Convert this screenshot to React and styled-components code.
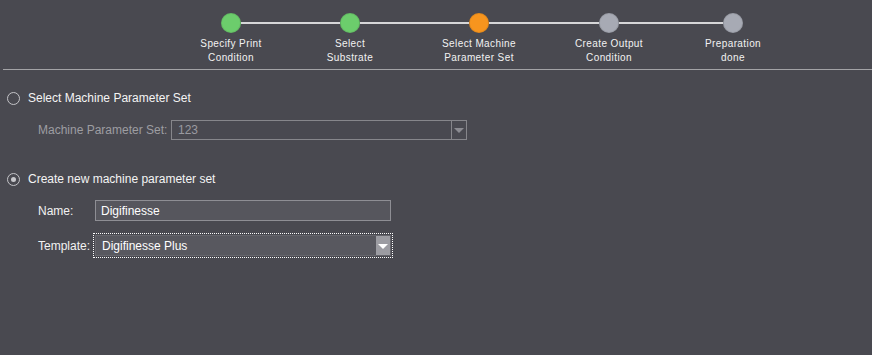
import React from "react";
import styled, { createGlobalStyle } from "styled-components";

const Global = createGlobalStyle`
  html, body { margin: 0; padding: 0; background: #494950; }
  body { font-family: "Liberation Sans", Arial, sans-serif; }
  #root { width: 872px; height: 355px; overflow: hidden; background: #494950; }
`;

const Page = styled.div`
  display: flex;
  flex-direction: column;
  padding-left: 3px;
`;

const Stepper = styled.div`
  display: flex;
  align-items: flex-start;
  padding: 13px 0 0 218px;
  height: 56px;
`;

const Step = styled.div`
  display: flex;
  flex-direction: column;
  align-items: center;
  width: 20px;
  flex: none;
`;

const Dot = styled.div`
  width: 20px;
  height: 20px;
  border-radius: 50%;
  background: ${(p) => p.$color};
  box-shadow: inset 0 0 0 1px rgba(0,0,0,0.08);
`;

const StepLabel = styled.div`
  margin-top: 4px;
  white-space: nowrap;
  text-align: center;
  font-size: 10px;
  line-height: 14px;
  letter-spacing: 0.4px;
  color: #f2f2f2;
`;

const Connector = styled.div`
  flex: none;
  width: ${(p) => p.$w}px;
  height: 2px;
  margin-top: 9px;
  background: #d6d6d8;
`;

const Separator = styled.div`
  height: 1px;
  background: #a3a3a6;
`;

const Form = styled.div`
  display: flex;
  flex-direction: column;
  padding: 20px 0 0 4px;
  font-size: 12px;
  color: #f4f4f4;
`;

const RadioRow = styled.label`
  display: flex;
  align-items: center;
  gap: 8px;
  height: 16px;
  margin-top: ${(p) => p.$mt || 0}px;
`;

const RadioCircle = styled.span`
  box-sizing: border-box;
  width: 13px;
  height: 13px;
  border-radius: 50%;
  border: 1px solid #c4c4c8;
  display: flex;
  align-items: center;
  justify-content: center;
  &::after {
    content: "";
    display: ${(p) => (p.$checked ? "block" : "none")};
    width: 5px;
    height: 5px;
    border-radius: 50%;
    background: #c8c8cc;
  }
`;

const FieldRow = styled.div`
  display: flex;
  align-items: center;
  padding-left: 31px;
  margin-top: ${(p) => p.$mt || 0}px;
`;

const FieldLabel = styled.span`
  width: ${(p) => p.$w}px;
  flex: none;
  white-space: nowrap;
  color: ${(p) => (p.$disabled ? "#9d9da2" : "#f2f2f2")};
`;

const Combo = styled.div`
  box-sizing: border-box;
  display: flex;
  width: ${(p) => p.$w}px;
  height: ${(p) => p.$h}px;
  border: 1px solid ${(p) => (p.$disabled ? "#86868b" : "#66666c")};
  background: ${(p) => (p.$disabled ? "transparent" : "#58585f")};
  outline: ${(p) => (p.$focus ? "1px dotted #ffffff" : "none")};
  outline-offset: 1px;
`;

const ComboText = styled.div`
  flex: 1;
  display: flex;
  align-items: center;
  padding-left: ${(p) => p.$pl}px;
  color: ${(p) => (p.$disabled ? "#9a9aa0" : "#ffffff")};
`;

const ArrowBtn = styled.div`
  width: ${(p) => p.$w}px;
  flex: none;
  display: flex;
  align-items: center;
  justify-content: center;
  background: ${(p) => (p.$disabled ? "transparent" : "#9c9ca2")};
  border-left: ${(p) => (p.$disabled ? "1px solid #86868b" : "none")};
`;

const Tri = styled.span`
  width: 0;
  height: 0;
  border-left: 5px solid transparent;
  border-right: 5px solid transparent;
  border-top: 5px solid ${(p) => p.$color};
  margin-top: 1px;
`;

const TextField = styled.div`
  box-sizing: border-box;
  width: 296px;
  height: 21px;
  border: 1px solid #8e8e94;
  background: #56565d;
  display: flex;
  align-items: center;
  padding-left: 5px;
  color: #ffffff;
`;

const steps = [
  { c: "#6ccd6c", l: ["Specify Print", "Condition"] },
  { c: "#6ccd6c", l: ["Select", "Substrate"] },
  { c: "#f7951e", l: ["Select Machine", "Parameter Set"] },
  { c: "#a7aab4", l: ["Create Output", "Condition"] },
  { c: "#a7aab4", l: ["Preparation", "done"] },
];
const gaps = [99, 109, 110, 104];

export default function App() {
  return (
    <>
      <Global />
      <Page>
        <Stepper>
          {steps.map((s, i) => (
            <React.Fragment key={i}>
              <Step>
                <Dot $color={s.c} />
                <StepLabel>
                  {s.l[0]}
                  <br />
                  {s.l[1]}
                </StepLabel>
              </Step>
              {i < gaps.length && <Connector $w={gaps[i]} />}
            </React.Fragment>
          ))}
        </Stepper>
        <Separator />
        <Form>
          <RadioRow>
            <RadioCircle />
            <span>Select Machine Parameter Set</span>
          </RadioRow>
          <FieldRow $mt={14}>
            <FieldLabel $w={133} $disabled>Machine Parameter Set:</FieldLabel>
            <Combo $w={296} $h={20} $disabled>
              <ComboText $pl={6} $disabled>123</ComboText>
              <ArrowBtn $w={14} $disabled>
                <Tri $color="#8c8c92" />
              </ArrowBtn>
            </Combo>
          </FieldRow>
          <RadioRow $mt={31}>
            <RadioCircle $checked />
            <span>Create new machine parameter set</span>
          </RadioRow>
          <FieldRow $mt={13}>
            <FieldLabel $w={57}>Name:</FieldLabel>
            <TextField>Digifinesse</TextField>
          </FieldRow>
          <FieldRow $mt={14}>
            <FieldLabel $w={57}>Template:</FieldLabel>
            <Combo $w={296} $h={21} $focus>
              <ComboText $pl={6}>Digifinesse Plus</ComboText>
              <ArrowBtn $w={14}>
                <Tri $color="#ffffff" />
              </ArrowBtn>
            </Combo>
          </FieldRow>
        </Form>
      </Page>
    </>
  );
}
